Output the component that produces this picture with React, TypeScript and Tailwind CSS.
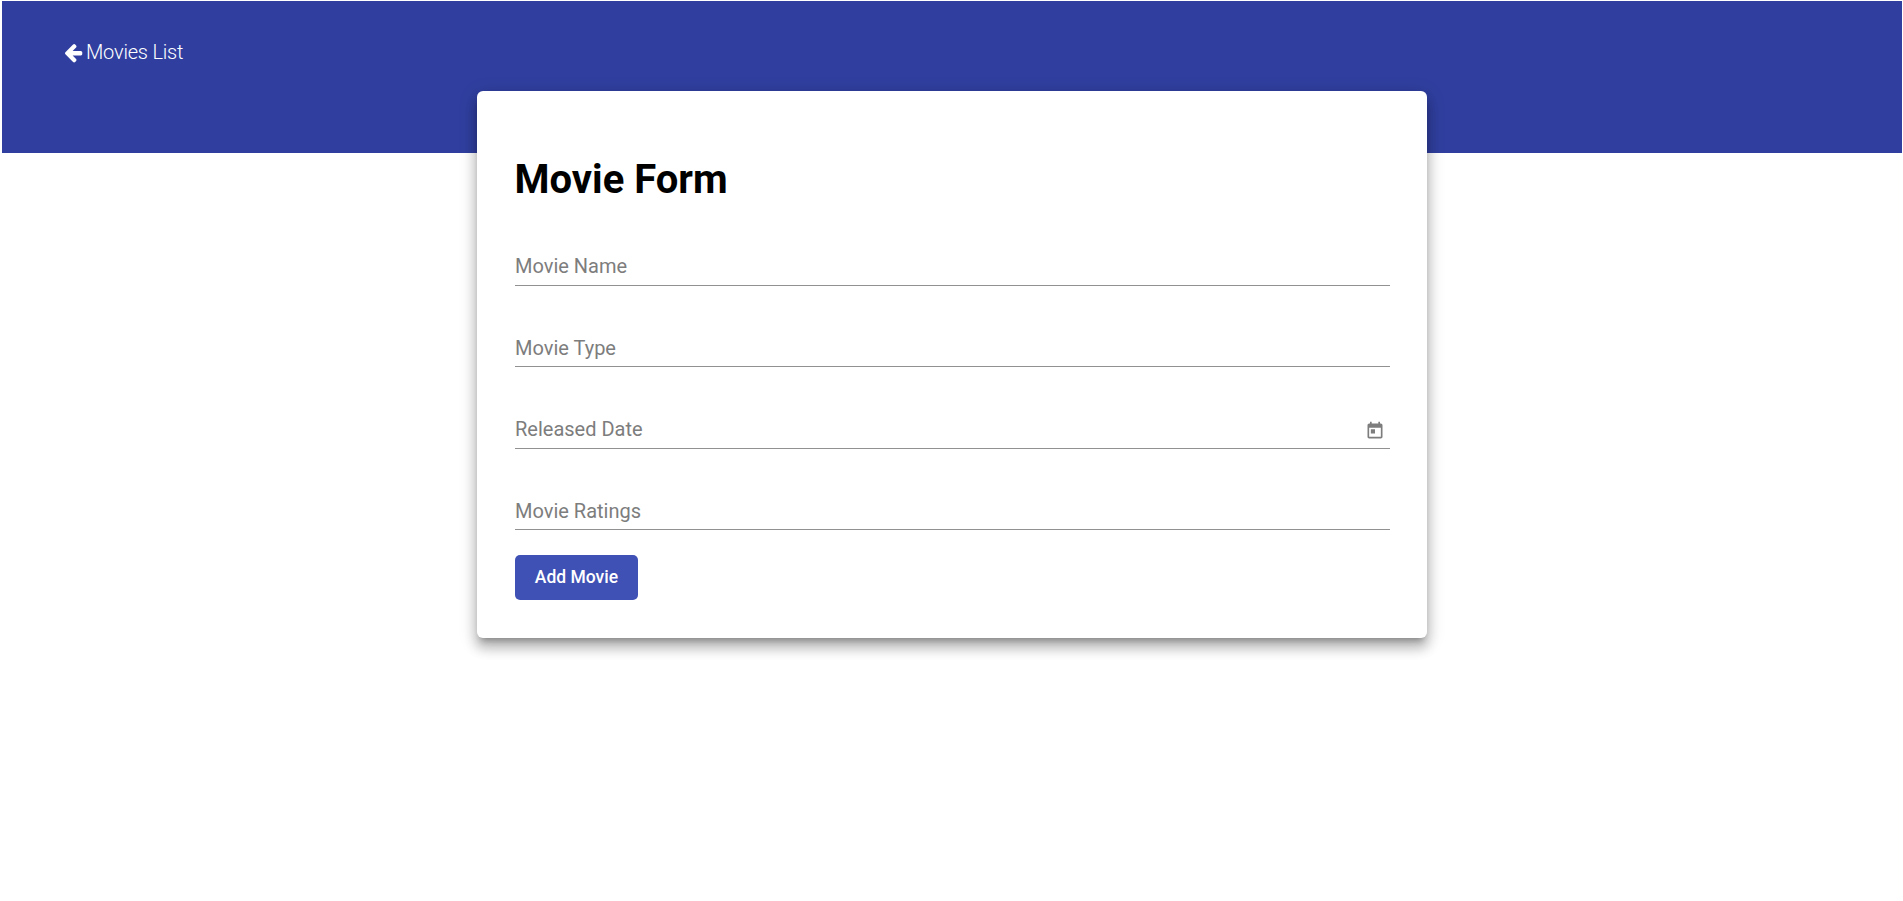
import React from "react";

function ArrowLeftIcon() {
  return (
    <svg viewBox="192 0 1536 1792" className="h-[21px] w-[18px] shrink-0" fill="currentColor" aria-hidden="true">
      <path d="M1664 896v128q0 53-32.5 90.5t-84.5 37.5h-704l293 294q38 36 38 90t-38 90l-75 76q-37 37-90 37-52 0-91-37l-651-652q-37-37-37-90 0-52 37-91l651-650q38-38 91-38 52 0 90 38l75 74q38 38 38 91t-38 91l-293 293h704q52 0 84.5 37.5t32.5 90.5z" />
    </svg>
  );
}

function CalendarIcon() {
  return (
    <svg viewBox="0 0 24 24" className="size-[20px]" fill="currentColor" aria-hidden="true">
      <path d="M19 3h-1V1h-2v2H8V1H6v2H5c-1.11 0-1.99.9-1.99 2L3 19c0 1.1.89 2 2 2h14c1.1 0 2-.9 2-2V5c0-1.1-.9-2-2-2zm0 16H5V8h14v11zM7 10h5v5H7z" />
    </svg>
  );
}

function Field({ label, className, icon }: { label: string; className: string; icon?: React.ReactNode }) {
  return (
    <div className={`flex items-end justify-between border-b border-[#919191] text-[#7d7d7d] ${className}`}>
      <span className="text-[20px] leading-[24px]">{label}</span>
      {icon}
    </div>
  );
}

export default function App() {
  return (
    <div className="h-[901px] overflow-hidden bg-white pt-px pr-px pl-[2px] font-['Roboto',sans-serif]">
      <header className="h-[152px] bg-[#303f9f] pt-[39px] pl-[63px] text-white">
        <a href="#" className="inline-flex h-[24px] items-center gap-[3px] text-[20px] leading-[24px] font-light tracking-[-0.2px]">
          <ArrowLeftIcon />
          Movies List
        </a>
      </header>
      <main className="relative -mt-[62px] ml-[475px] h-[547px] w-[950px] rounded-[6px] bg-white pr-[37px] pl-[38px] shadow-[0_6px_6px_-4px_rgba(0,0,0,0.28),0_10px_12px_1px_rgba(0,0,0,0.19),0_4px_17px_2px_rgba(0,0,0,0.16)]">
        <h1 className="-ml-[0.5px] pt-[65px] text-[40px] leading-[47px] font-bold text-black">Movie Form</h1>
        <form>
          <Field label="Movie Name" className="mt-[45px] h-[38px] pb-[7px]" />
          <Field label="Movie Type" className="mt-[43px] h-[38px] pb-[6px]" />
          <Field
            label="Released Date"
            className="mt-[44px] h-[38px] pb-[7px]"
            icon={
              <button type="button" aria-label="Open calendar" className="mr-[5px] size-[20px]">
                <CalendarIcon />
              </button>
            }
          />
          <Field label="Movie Ratings" className="mt-[43px] h-[38px] pb-[6px]" />
          <button
            type="button"
            className="mt-[25px] flex h-[45px] w-[123px] items-center justify-center rounded-[5px] bg-[#3f51b5] text-[17.5px] font-medium text-white"
          >
            Add Movie
          </button>
        </form>
      </main>
    </div>
  );
}
